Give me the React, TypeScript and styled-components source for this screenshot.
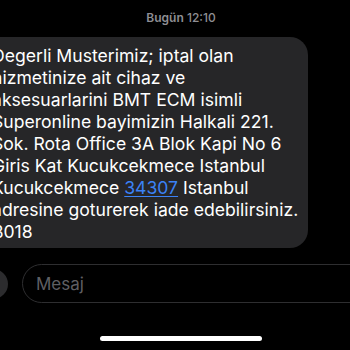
import styled, { createGlobalStyle } from 'styled-components'

const GlobalStyle = createGlobalStyle`
  html, body {
    margin: 0;
    padding: 0;
    background: #000;
  }
  body {
    font-family: Inter, "Noto Sans", sans-serif;
    -webkit-font-smoothing: antialiased;
  }
`

const lines = [
  'Degerli Musterimiz; iptal olan',
  'hizmetinize ait cihaz ve',
  'aksesuarlarini BMT ECM isimli',
  'Superonline bayimizin Halkali 221.',
  'Sok. Rota Office 3A Blok Kapi No 6',
  'Giris Kat Kucukcekmece Istanbul',
]

const App = () => {
  return (
    <Screen>
      <GlobalStyle />
      <Timestamp>
        <strong>Bugün</strong> 12:10
      </Timestamp>
      <Bubble>
        {lines.map((line) => (
          <Line key={line}>{line}</Line>
        ))}
        <Line>
          Kucukcekmece <Link>34307</Link> Istanbul
        </Line>
        <Line>adresine goturerek iade edebilirsiniz.</Line>
        <Line>B018</Line>
      </Bubble>
      <Composer>
        <PlusButton />
        <Input>Mesaj</Input>
      </Composer>
      <HomeIndicator />
    </Screen>
  )
}

export default App

const Screen = styled.div`
  width: 350px;
  height: 350px;
  overflow: hidden;
  background: #000;
  display: flex;
  flex-direction: column;
`

const Timestamp = styled.div`
  padding: 10px 0 0 12px;
  height: 16px;
  line-height: 16px;
  text-align: center;
  font-size: 12px;
  font-weight: 500;
  color: #8e8e93;

  strong {
    font-weight: 600;
  }
`

const Bubble = styled.div`
  margin: 11px 0 0 -20px;
  width: 328px;
  box-sizing: border-box;
  padding: 8px 0 5px 12px;
  background: #262628;
  border-radius: 18px;
  color: #fff;
  font-size: 17.6px;
`

const Line = styled.div`
  height: 22px;
  line-height: 22px;
  white-space: nowrap;
`

const Link = styled.span`
  color: #3b82f6;
  text-decoration: underline;
  text-underline-offset: 2px;
`

const Composer = styled.div`
  margin-top: 16px;
  display: flex;
  align-items: center;
  gap: 14px;
`

const PlusButton = styled.div`
  margin-left: -22px;
  width: 30px;
  height: 30px;
  border-radius: 50%;
  background: #2c2c2e;
  flex-shrink: 0;
`

const Input = styled.div`
  flex: 1;
  margin-right: -30px;
  height: 39px;
  box-sizing: border-box;
  border: 1px solid #2e2e30;
  border-radius: 20px;
  padding-left: 13px;
  display: flex;
  align-items: center;
  font-size: 17px;
  color: #5f5f63;
`

const HomeIndicator = styled.div`
  margin: 33px 0 0 100px;
  width: 162px;
  height: 5px;
  border-radius: 3px;
  background: #fff;
`
